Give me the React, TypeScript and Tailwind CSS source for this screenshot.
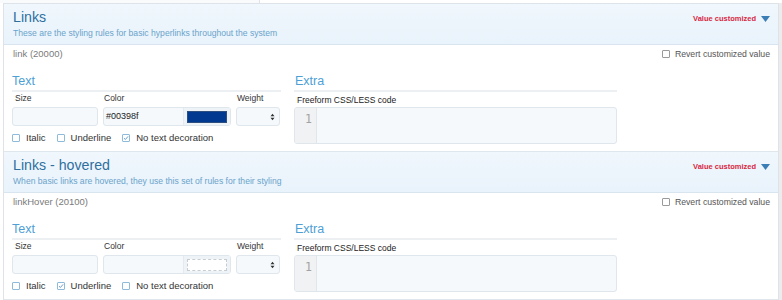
import React from 'react';

interface StyleSectionProps {
  title: string;
  description: string;
  ruleName: string;
  colorValue: string;
  swatch: string | null;
  italic: boolean;
  underline: boolean;
  noDecoration: boolean;
}

const Check: React.FC<{ checked: boolean; label: string }> = ({ checked, label }) => (
  <label className="flex items-center gap-[6px] text-[9.5px] leading-[12px] text-[#333]">
    <span className="w-[8px] h-[8px] border border-[#8fbbdb] rounded-[1px] bg-white flex items-center justify-center">
      {checked && (
        <svg width="6" height="6" viewBox="0 0 8 8">
          <path d="M1.3 4.2 L3.2 6 L6.8 1.8" fill="none" stroke="#6a9cc4" strokeWidth="1.3" />
        </svg>
      )}
    </span>
    {label}
  </label>
);

const StyleSection: React.FC<StyleSectionProps> = ({
  title,
  description,
  ruleName,
  colorValue,
  swatch,
  italic,
  underline,
  noDecoration,
}) => {
  return (
    <div className="border-b border-[#dfe6ec]">
      {/* Header */}
      <div className="h-[41px] bg-gradient-to-b from-[#f0f7fd] to-[#e9f3fb] border-b border-[#d9e5ee] flex items-start justify-between pl-[9px] pr-[8px]">
        <div className="pt-[4px]">
          <h2 className="text-[14.2px] leading-[18px] text-[#2f709f]">{title}</h2>
          <p className="text-[8.6px] leading-[11px] text-[#6aa3cb] mt-[2px]">{description}</p>
        </div>
        <div className="flex items-center gap-[5px] pt-[9px]">
          <span className="text-[7.5px] leading-[11px] font-bold text-[#d8263f]">Value customized</span>
          <svg width="9" height="6" viewBox="0 0 9 6">
            <path d="M0 0 H9 L4.5 6 Z" fill="#3b7db5" />
          </svg>
        </div>
      </div>

      {/* Rule row */}
      <div className="h-[19px] flex items-center justify-between pl-[9px] pr-[8px]">
        <span className="text-[9.5px] text-[#7a7a7a]">{ruleName}</span>
        <label className="flex items-center gap-[5px] text-[8.7px] text-[#555]">
          <span className="w-[8px] h-[8px] border border-[#9a9a9a] bg-white rounded-[1px]" />
          Revert customized value
        </label>
      </div>

      {/* Body */}
      <div className="flex gap-[13px] pl-[8px] pt-[9px] pb-[7px]">
        <div className="w-[269px]">
          <h3 className="text-[12.5px] leading-[16px] text-[#4da0d6] border-b-2 border-[#edf0f2] pb-[1px]">Text</h3>
          <div className="flex gap-[5px]">
            <div className="w-[86px]">
              <div className="text-[8.5px] leading-[11px] text-[#333] pl-[3px] mt-[1px]">Size</div>
              <div className="mt-[3px] h-[19px] border border-[#dfe6ec] rounded-[3px] bg-[#f5f9fc]" />
            </div>
            <div className="w-[128px]">
              <div className="text-[8.5px] leading-[11px] text-[#333] pl-[1px] mt-[1px]">Color</div>
              <div className="mt-[3px] h-[19px] border border-[#dfe6ec] rounded-[3px] bg-[#f5f9fc] flex">
                <div className="flex-1 text-[9px] leading-[17px] text-[#222] pl-[2px]">{colorValue}</div>
                <div className="w-[47px] bg-[#eef3f7] flex items-center justify-center border-l border-[#e4eaef]">
                  {swatch ? (
                    <div className="w-[40px] h-[12px] border border-[#2d4f80]" style={{ backgroundColor: swatch }} />
                  ) : (
                    <div className="w-[40px] h-[12px] bg-white border border-dashed border-[#c7ccd0]" />
                  )}
                </div>
              </div>
            </div>
            <div className="w-[44px]">
              <div className="text-[8.5px] leading-[11px] text-[#333] pl-[1px] mt-[1px]">Weight</div>
              <div className="mt-[3px] h-[19px] border border-[#dfe6ec] rounded-[3px] bg-[#f5f9fc] flex items-center justify-end pr-[4px]">
                <svg width="5" height="8" viewBox="0 0 5 8">
                  <path d="M0.5 3.3 L2.5 0.8 L4.5 3.3 Z M0.5 4.7 L2.5 7.2 L4.5 4.7 Z" fill="#333" />
                </svg>
              </div>
            </div>
          </div>
          <div className="flex items-center gap-[11px] mt-[6px] h-[12px]">
            <Check checked={italic} label="Italic" />
            <Check checked={underline} label="Underline" />
            <Check checked={noDecoration} label="No text decoration" />
          </div>
        </div>

        <div className="w-[323px]">
          <h3 className="text-[12.5px] leading-[16px] text-[#4da0d6] border-b-2 border-[#edf0f2] pb-[1px] pl-[1px]">Extra</h3>
          <div className="text-[8.5px] leading-[11px] text-[#222] pl-[3px] mt-[3px]">Freeform CSS/LESS code</div>
          <div className="mt-[1px] h-[37px] border border-[#dfe6ec] rounded-[3px] bg-[#f5f9fc] flex overflow-hidden">
            <div className="w-[22px] bg-[#f1f2f3] border-r border-[#e2e6e9] text-right pr-[4px] pt-[4px] text-[11.5px] leading-[14px] text-[#a3a3a3] font-['DejaVu_Sans_Mono',monospace]">
              1
            </div>
            <div className="flex-1" />
          </div>
        </div>
      </div>
    </div>
  );
};

export default function App() {
  return (
    <div className="w-[782px] h-[300px] overflow-hidden bg-white font-['Liberation_Sans',Arial,sans-serif] flex flex-col">
      <div className="h-[3px] flex shrink-0">
        <div className="w-[260px] border-r border-[#e1e4e6] bg-[#f9fafb]" />
        <div className="flex-1" />
      </div>
      <div className="flex flex-1">
        <div className="w-[3px]" />
        <div className="w-[776px] border-l border-r border-t border-[#dde3e8] bg-white">
          <StyleSection
            title="Links"
            description="These are the styling rules for basic hyperlinks throughout the system"
            ruleName="link (20000)"
            colorValue="#00398f"
            swatch="#00398f"
            italic={false}
            underline={false}
            noDecoration={true}
          />
          <StyleSection
            title="Links - hovered"
            description="When basic links are hovered, they use this set of rules for their styling"
            ruleName="linkHover (20100)"
            colorValue=""
            swatch={null}
            italic={false}
            underline={true}
            noDecoration={false}
          />
        </div>
        <div className="w-[3px] bg-[#ececec]" />
      </div>
    </div>
  );
}
